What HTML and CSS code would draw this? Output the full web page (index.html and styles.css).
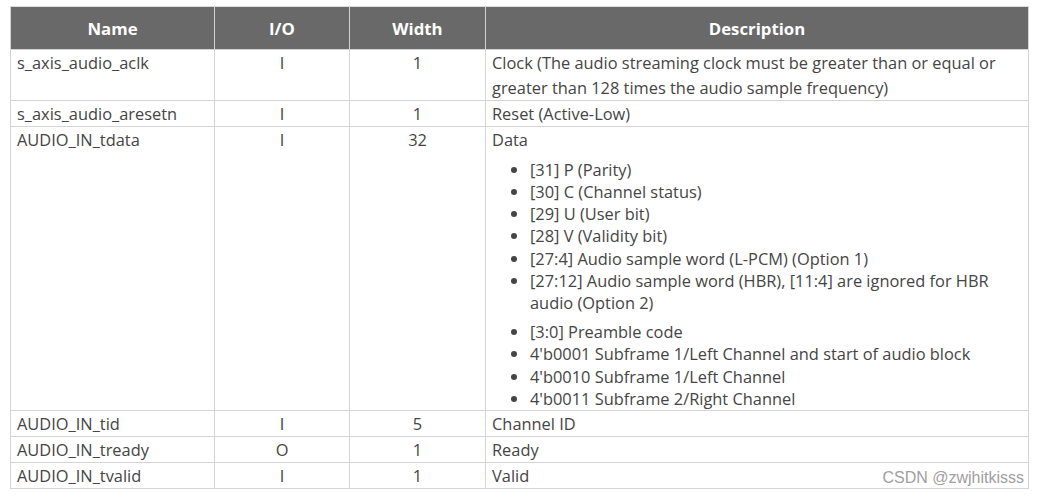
FILE: index.html
```html
<!DOCTYPE html>
<html>
<head>
<meta charset="utf-8">
<link rel="stylesheet" href="styles.css">
</head>
<body>
<div class="page">
<table class="sig">
  <colgroup>
    <col class="c-name"><col class="c-io"><col class="c-width"><col class="c-desc">
  </colgroup>
  <thead>
    <tr><th>Name</th><th>I/O</th><th>Width</th><th>Description</th></tr>
  </thead>
  <tbody>
    <tr><td>s_axis_audio_aclk</td><td class="ctr">I</td><td class="ctr">1</td><td>Clock (The audio streaming clock must be greater than or equal or greater than 128 times the audio sample frequency)</td></tr>
    <tr><td>s_axis_audio_aresetn</td><td class="ctr">I</td><td class="ctr">1</td><td>Reset (Active-Low)</td></tr>
    <tr><td>AUDIO_IN_tdata</td><td class="ctr">I</td><td class="ctr">32</td><td>
      <p class="lead">Data</p>
      <ul class="bits">
        <li>[31] P (Parity)</li>
        <li>[30] C (Channel status)</li>
        <li>[29] U (User bit)</li>
        <li>[28] V (Validity bit)</li>
        <li>[27:4] Audio sample word (L-PCM) (Option 1)</li>
        <li>[27:12] Audio sample word (HBR), [11:4] are ignored for HBR audio (Option 2)</li>
      </ul>
      <ul class="bits">
        <li>[3:0] Preamble code</li>
        <li>4'b0001 Subframe 1/Left Channel and start of audio block</li>
        <li>4'b0010 Subframe 1/Left Channel</li>
        <li>4'b0011 Subframe 2/Right Channel</li>
      </ul>
    </td></tr>
    <tr><td>AUDIO_IN_tid</td><td class="ctr">I</td><td class="ctr">5</td><td>Channel ID</td></tr>
    <tr><td>AUDIO_IN_tready</td><td class="ctr">O</td><td class="ctr">1</td><td>Ready</td></tr>
    <tr><td>AUDIO_IN_tvalid</td><td class="ctr">I</td><td class="ctr">1</td><td>Valid</td></tr>
  </tbody>
</table>
<div class="mark">CSDN @zwjhitkisss</div>
</div>
</body>
</html>
```
FILE: styles.css
```css
html, body {
  margin: 0;
  padding: 0;
  background: #fff;
}
.page {
  position: relative;
  padding: 6px 10px 0 10px;
  width: 1018px;
}
.sig {
  border-collapse: collapse;
  width: 1018px;
  table-layout: fixed;
  font-family: "Open Sans", "Noto Sans", sans-serif;
  font-size: 16.4px;
  color: #454545;
}
.c-name { width: 204px; }
.c-io { width: 135px; }
.c-width { width: 136px; }
.c-desc { width: 543px; }
.sig th {
  background: #696969;
  color: #fff;
  font-weight: 700;
  font-size: 16.8px;
  height: 42px;
  padding: 0 6px;
  text-align: center;
  border: 1px solid #d4d4d4;
  border-top-color: #dcdcdc;
}
.sig td {
  border: 1px solid #d4d4d4;
  padding: 0 6px;
  line-height: 25px;
  vertical-align: top;
  text-align: left;
}
.sig td.ctr { text-align: center; }
.lead { margin: 0; }
.bits {
  margin: 6.5px 0 0 0;
  padding-left: 38px;
  line-height: 22.3px;
}
.mark {
  position: absolute;
  right: 14px;
  bottom: 2px;
  font-family: "Liberation Sans", Arial, sans-serif;
  font-size: 16px;
  color: #a0a0a0;
  text-shadow: 0 0 2px #fff;
}
```
